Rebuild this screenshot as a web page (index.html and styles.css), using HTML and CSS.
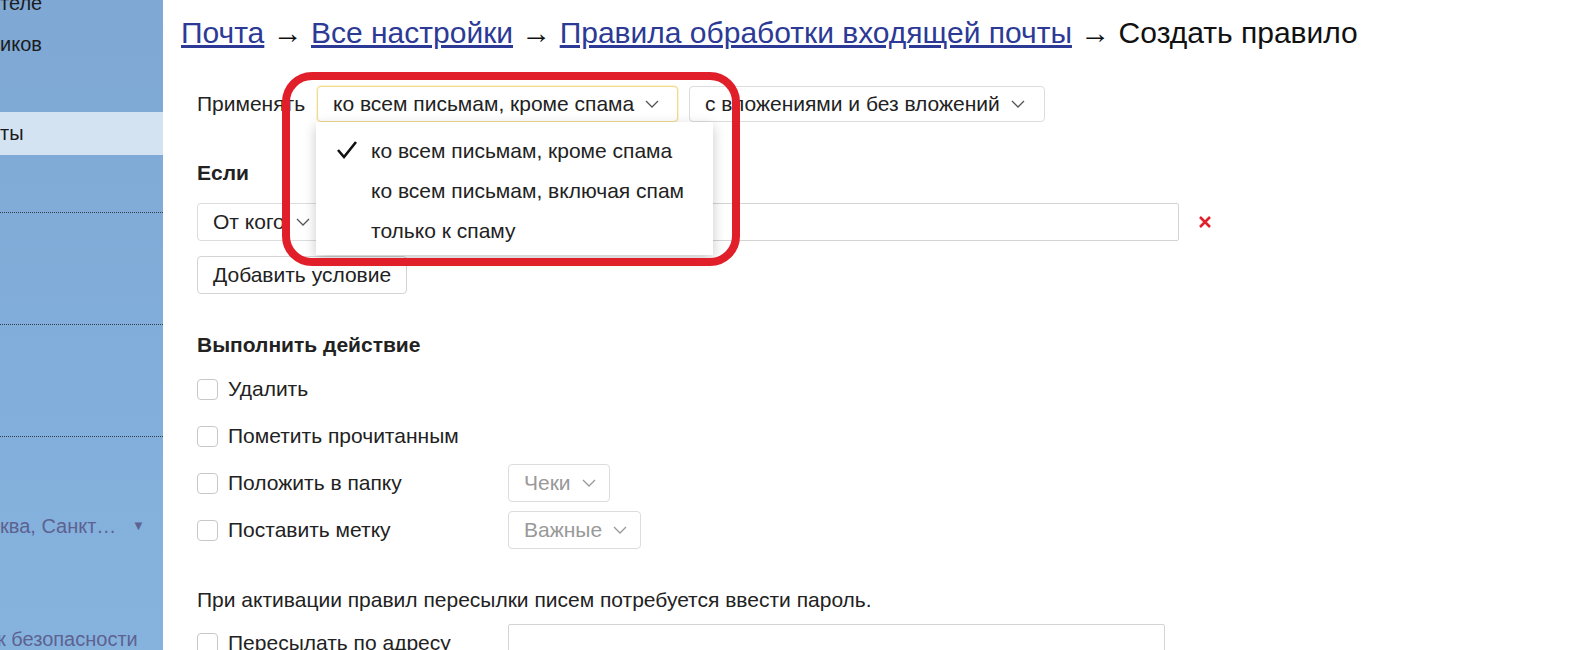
FILE: index.html
```html
<!DOCTYPE html>
<html lang="ru">
<head>
    <meta charset="UTF-8" />
    <title>Создать правило</title>
    <link rel="stylesheet" href="styles.css">
</head>
<body>
    <div class="sidebar">
        <div class="side-item first">теле</div>
        <div class="side-item">иков</div>
        <div class="side-item selected">ты</div>
        <div class="side-line l1"></div>
        <div class="side-line"></div>
        <div class="side-line"></div>
        <div class="side-item tz">ква, Санкт… <span class="tz-arrow">▼</span></div>
        <div class="side-item tz last">к безопасности</div>
    </div>

    <div class="main">
        <div class="crumbs">
            <a href="#">Почта</a> → <a href="#">Все настройки</a> → <a href="#">Правила обработки входящей почты</a> → Создать правило
        </div>

        <div class="form">
            <div class="apply-row">
                <span class="apply-label">Применять</span>
                <div class="select-wrap">
                    <div class="select focused">ко всем письмам, кроме спама
                        <svg class="chev" width="14" height="8" viewBox="0 0 14 8"><polyline points="1,1 7,7 13,1" fill="none" stroke="#555" stroke-width="1.3"/></svg>
                    </div>
                    <div class="popup">
                        <div class="popup-item">
                            <svg class="check" width="22" height="20" viewBox="0 0 22 20"><path d="M2 10 L8 17 L20 2" fill="none" stroke="#111" stroke-width="2.6"/></svg>
                            ко всем письмам, кроме спама
                        </div>
                        <div class="popup-item">ко всем письмам, включая спам</div>
                        <div class="popup-item">только к спаму</div>
                    </div>
                    <div class="annotation"></div>
                </div>
                <div class="select second">с вложениями и без вложений
                    <svg class="chev" width="14" height="8" viewBox="0 0 14 8"><polyline points="1,1 7,7 13,1" fill="none" stroke="#555" stroke-width="1.3"/></svg>
                </div>
            </div>

            <div class="heading if-head">Если</div>
            <div class="cond-row">
                <div class="cond-fields">
                    <div class="select tall">От кого
                        <svg class="chev" width="14" height="8" viewBox="0 0 14 8"><polyline points="1,1 7,7 13,1" fill="none" stroke="#555" stroke-width="1.3"/></svg>
                    </div>
                    <div class="select tall hidden-part">
                        <svg class="chev" width="14" height="8" viewBox="0 0 14 8"><polyline points="1,1 7,7 13,1" fill="none" stroke="#555" stroke-width="1.3"/></svg>
                    </div>
                    <input class="text-input grow" type="text" />
                </div>
                <svg class="remove" width="16" height="16" viewBox="0 0 16 16"><path d="M3 3 L13 13 M13 3 L3 13" stroke="#e0212a" stroke-width="2.6"/></svg>
            </div>
            <button class="btn">Добавить условие</button>

            <div class="heading action-head">Выполнить действие</div>
            <div class="actions">
                <div class="action-row">
                    <label class="check-label"><span class="box"></span>Удалить</label>
                </div>
                <div class="action-row">
                    <label class="check-label"><span class="box"></span>Пометить прочитанным</label>
                </div>
                <div class="action-row">
                    <label class="check-label"><span class="box"></span>Положить в папку</label>
                    <div class="select muted">Чеки
                        <svg class="chev" width="14" height="8" viewBox="0 0 14 8"><polyline points="1,1 7,7 13,1" fill="none" stroke="#999" stroke-width="1.3"/></svg>
                    </div>
                </div>
                <div class="action-row">
                    <label class="check-label"><span class="box"></span>Поставить метку</label>
                    <div class="select muted">Важные
                        <svg class="chev" width="14" height="8" viewBox="0 0 14 8"><polyline points="1,1 7,7 13,1" fill="none" stroke="#999" stroke-width="1.3"/></svg>
                    </div>
                </div>
            </div>

            <div class="note">При активации правил пересылки писем потребуется ввести пароль.</div>
            <div class="action-row forward">
                <label class="check-label"><span class="box"></span>Пересылать по адресу</label>
                <input class="text-input forward-input" type="text" />
            </div>
        </div>
    </div>
</body>
</html>
```

FILE: styles.css
```css
body {
    margin: 0;
    height: 650px;
    overflow: hidden;
    display: flex;
    font-family: "Liberation Sans", Arial, sans-serif;
    color: #222;
    background-color: #fff;
}

/* left menu, only its right edge is in view */
.sidebar {
    width: 163px;
    flex-shrink: 0;
    background: linear-gradient(180deg, #7fa8d4 0%, #82aedb 60%, #86b3de 100%);
    overflow: hidden;
    font-size: 20px;
}

.side-item {
    height: 40px;
    line-height: 40px;
    white-space: nowrap;
    color: #1c1c1c;
}

.side-item.first {
    margin-top: -17px;
    margin-bottom: 1px;
}

.side-item.selected {
    margin-top: 48px;
    height: 43px;
    line-height: 43px;
    background-color: #d3e3f2;
}

.side-line {
    margin-top: 111px;
    border-top: 1px dotted #2f3d4d;
}

.side-line.l1 {
    margin-top: 57px;
}

.side-item.tz {
    margin-top: 69px;
    color: #5d6291;
}

.side-item.tz.last {
    margin-top: 73px;
    margin-left: -3px;
}

.tz-arrow {
    font-size: 13px;
    margin-left: 10px;
    vertical-align: 3px;
}

/* content */
.main {
    flex: 1;
    padding: 16px 0 0 18px;
}

.crumbs {
    font-size: 30px;
    line-height: 34px;
    color: #111;
    white-space: nowrap;
}

.crumbs a {
    color: #2c3a96;
    text-decoration: underline;
}

.form {
    padding-left: 16px;
    font-size: 21px;
}

.apply-row {
    margin-top: 36px;
    display: flex;
    align-items: center;
    height: 36px;
}

.apply-label {
    width: 120px;
}

.select-wrap {
    position: relative;
}

.select {
    box-sizing: border-box;
    display: inline-flex;
    align-items: center;
    height: 36px;
    padding: 0 13px 0 15px;
    border: 1px solid #dcdcdc;
    border-radius: 4px;
    background-color: #fff;
    white-space: nowrap;
}

.select .chev {
    margin-left: 11px;
}

.select.focused {
    width: 361px;
    border-color: #eedb8e;
    box-shadow: 0 0 0 1px rgba(247, 222, 120, 0.35);
}

.select.second {
    margin-left: 11px;
    width: 356px;
}

.select.tall {
    height: 38px;
    margin-right: 8px;
}

.select.hidden-part {
    width: 150px;
    justify-content: flex-end;
}

.select.muted {
    color: #999;
    height: 38px;
}

.popup {
    position: absolute;
    top: 36px;
    left: -1px;
    width: 397px;
    box-sizing: border-box;
    padding: 9px 0 4px;
    background-color: #fff;
    box-shadow: 0 4px 12px rgba(0, 0, 0, 0.22);
    z-index: 2;
}

.popup-item {
    position: relative;
    height: 40px;
    line-height: 40px;
    padding-left: 55px;
    white-space: nowrap;
}

.popup-item .check {
    position: absolute;
    left: 20px;
    top: 9px;
}

/* red marker drawn on the screenshot */
.annotation {
    position: absolute;
    left: -35px;
    top: -14px;
    width: 458px;
    height: 194px;
    box-sizing: border-box;
    border: 8px solid #e11f2b;
    border-radius: 30px;
    z-index: 3;
}

.heading {
    font-weight: bold;
    font-size: 21px;
    line-height: 24px;
}

.if-head {
    margin-top: 39px;
}

.cond-row {
    margin-top: 18px;
    display: flex;
    align-items: center;
}

.cond-fields {
    width: 982px;
    display: flex;
}

.grow {
    flex: 1;
}

.text-input {
    box-sizing: border-box;
    height: 38px;
    border: 1px solid #d4d4d4;
    border-radius: 2px;
    font-size: 21px;
}

.remove {
    margin-left: 18px;
}

.btn {
    margin-top: 15px;
    height: 38px;
    padding: 0 15px;
    font-family: inherit;
    font-size: 21px;
    color: #222;
    background-color: #fff;
    border: 1px solid #d4d4d4;
    border-radius: 4px;
}

.action-head {
    margin-top: 39px;
}

.actions {
    margin-top: 13px;
    display: flex;
    flex-direction: column;
    gap: 9px;
}

.action-row {
    display: flex;
    align-items: center;
    height: 38px;
}

.check-label {
    width: 311px;
    display: flex;
    align-items: center;
}

.box {
    box-sizing: border-box;
    width: 21px;
    height: 21px;
    margin-right: 10px;
    border: 1px solid #c8c8c8;
    border-radius: 4px;
}

.note {
    margin-top: 39px;
    line-height: 24px;
}

.action-row.forward {
    margin-top: 12px;
    align-items: flex-start;
}

.action-row.forward .check-label {
    margin-top: 7px;
}

.forward-input {
    width: 657px;
}
```
